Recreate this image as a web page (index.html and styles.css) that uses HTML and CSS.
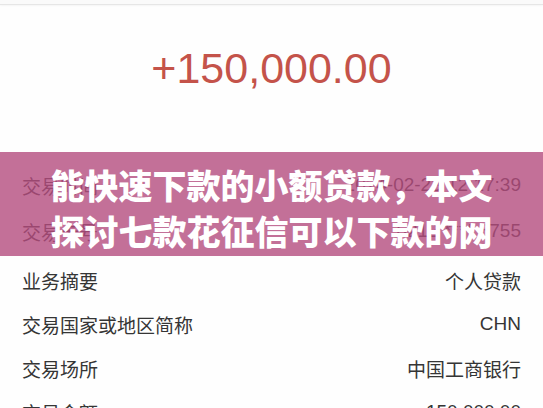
FILE: index.html
```html
<!DOCTYPE html>
<html lang="zh-CN">
<head>
<meta charset="utf-8">
<title>交易详情</title>
<link rel="stylesheet" href="styles.css">
</head>
<body>
<div class="page">
  <div class="topbar"></div>
  <div class="amount">+150,000.00</div>
  <div class="list">
    <div class="row"><span class="label">交易时间</span><span class="value">2024-02-23 12:17:39</span></div>
    <div class="row"><span class="label">交易卡号</span><span class="value">6212 **** 8755</span></div>
    <div class="row row-gap"><span class="label">业务摘要</span><span class="value">个人贷款</span></div>
    <div class="row row-s"><span class="label">交易国家或地区简称</span><span class="value">CHN</span></div>
    <div class="row row-s"><span class="label">交易场所</span><span class="value">中国工商银行</span></div>
    <div class="row row-s"><span class="label">交易金额</span><span class="value">150,000.00</span></div>
  </div>
  <div class="banner">
    <div class="banner-line">能快速下款的小额贷款，本文</div>
    <div class="banner-line">探讨七款花征信可以下款的网</div>
  </div>
</div>
</body>
</html>
```
FILE: styles.css
```css
html, body {
  margin: 0;
  padding: 0;
  background: #ffffff;
}
.page {
  position: relative;
  width: 543px;
  height: 408px;
  overflow: hidden;
  background: #fefefe;
  font-family: "Liberation Sans", "Noto Sans CJK SC", sans-serif;
}
.topbar {
  height: 4px;
  border-bottom: 1px solid #e6e6e6;
  box-shadow: 0 1px 2px rgba(0,0,0,0.04);
  background: #fafafa;
}
.amount {
  padding-top: 38px;
  padding-bottom: 69px;
  height: 50px;
  line-height: 50px;
  font-size: 43px;
  color: #c4534a;
  text-align: center;
}
.list {
  display: flex;
  flex-direction: column;
}
.row {
  height: 46px;
  display: flex;
  align-items: center;
  justify-content: space-between;
  padding: 0 22px;
  font-size: 19px;
  color: #353535;
}
.row-gap {
  margin-top: 4px;
  height: 44px;
}
.row-s {
  height: 44px;
}
.label {
  font-family: "Noto Sans CJK SC", sans-serif;
}
.banner {
  position: absolute;
  top: 152px;
  left: 0;
  right: 0;
  height: 104px;
  box-sizing: border-box;
  padding-top: 10px;
  background: rgba(180, 76, 126, 0.8);
  display: flex;
  flex-direction: column;
  align-items: center;
}
.banner-line {
  white-space: nowrap;
  height: 46px;
  line-height: 46px;
  font-family: "Noto Sans CJK SC", sans-serif;
  font-weight: 900;
  font-size: 34px;
  color: #ffffff;
}
```
